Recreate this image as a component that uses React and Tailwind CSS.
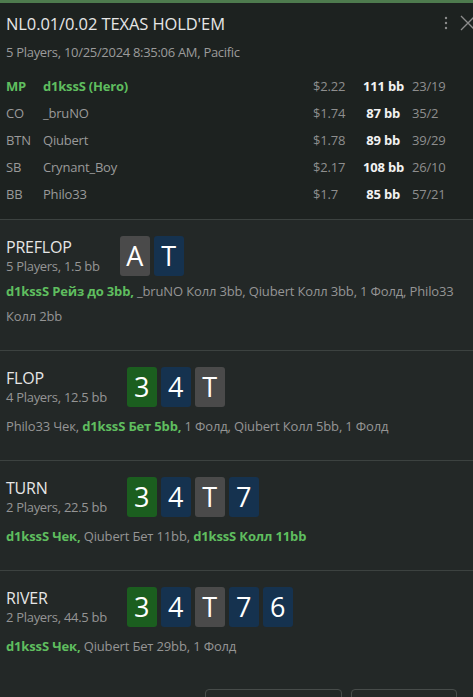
import React from 'react';

const players = [
  { pos: 'MP', name: 'd1kssS (Hero)', stack: '$2.22', bb: '111 bb', stats: '23/19', hero: true },
  { pos: 'CO', name: '_bruNO', stack: '$1.74', bb: '87 bb', stats: '35/2' },
  { pos: 'BTN', name: 'Qiubert', stack: '$1.78', bb: '89 bb', stats: '39/29' },
  { pos: 'SB', name: 'Crynant_Boy', stack: '$2.17', bb: '108 bb', stats: '26/10' },
  { pos: 'BB', name: 'Philo33', stack: '$1.7', bb: '85 bb', stats: '57/21' },
];

const cardColors = {
  g: 'bg-[#1b5e1f]',
  b: 'bg-[#15324f]',
  n: 'bg-[#4a4a4a]',
};

const streets = [
  {
    title: 'PREFLOP',
    sub: '5 Players, 1.5 bb',
    cards: [['A', 'n'], ['T', 'b']],
    actions: [
      ['d1kssS Рейз до 3bb,', true],
      [' _bruNO Колл 3bb, Qiubert Колл 3bb, 1 Фолд, Philo33 Колл 2bb', false],
    ],
    gap: 'mt-[3px]',
  },
  {
    title: 'FLOP',
    sub: '4 Players, 12.5 bb',
    cards: [['3', 'g'], ['4', 'b'], ['T', 'n']],
    actions: [
      ['Philo33 Чек, ', false],
      ['d1kssS Бет 5bb,', true],
      [' 1 Фолд, Qiubert Колл 5bb, 1 Фолд', false],
    ],
    gap: 'mt-[7px]',
  },
  {
    title: 'TURN',
    sub: '2 Players, 22.5 bb',
    cards: [['3', 'g'], ['4', 'b'], ['T', 'n'], ['7', 'b']],
    actions: [
      ['d1kssS Чек,', true],
      [' Qiubert Бет 11bb, ', false],
      ['d1kssS Колл 11bb', true],
    ],
    gap: 'mt-[7px]',
  },
  {
    title: 'RIVER',
    sub: '2 Players, 44.5 bb',
    cards: [['3', 'g'], ['4', 'b'], ['T', 'n'], ['7', 'b'], ['6', 'b']],
    actions: [
      ['d1kssS Чек,', true],
      [' Qiubert Бет 29bb, 1 Фолд', false],
    ],
    gap: 'mt-[7px]',
  },
];

const Card = ({ rank, color }) => (
  <div className={`w-[30px] h-[40px] rounded-[3px] flex items-center justify-center text-[27px] text-white ${cardColors[color]}`}>
    {rank}
  </div>
);

export default function App() {
  return (
    <div className="w-[473px] h-[697px] overflow-hidden bg-[#232827] text-[13px]" style={{ fontFamily: '"Open Sans", "Noto Sans", sans-serif' }}>
      <div className="h-[3px] bg-[#4e7b4e]" />

      {/* header */}
      <div className="bg-[#1d2220] border-b border-[#3c4240] pb-[11px]">
        <div className="flex items-start pl-[6px] pt-[9px]">
          <div className="flex-1">
            <div className="text-[16.5px] leading-[24px] text-[#e6e6e6] tracking-[-0.1px]">NL0.01/0.02 TEXAS HOLD'EM</div>
            <div className="text-[13px] leading-[18px] mt-[7px] text-[#9b9b9b] tracking-[-0.3px]">5 Players, 10/25/2024 8:35:06 AM, Pacific</div>
          </div>
          <div className="flex items-start gap-[12px] pt-[3px] -mr-[3px]">
            <svg width="4" height="14" viewBox="0 0 4 14" className="mt-[1px]">
              <circle cx="2" cy="2" r="1.2" fill="#8c8c8c" />
              <circle cx="2" cy="7" r="1.2" fill="#8c8c8c" />
              <circle cx="2" cy="12" r="1.2" fill="#8c8c8c" />
            </svg>
            <svg width="16" height="16" viewBox="0 0 16 16">
              <path d="M1 1 L15 15 M15 1 L1 15" stroke="#8c8c8c" strokeWidth="1.3" />
            </svg>
          </div>
        </div>

        <div className="mt-[12px]">
          {players.map((p) => (
            <div key={p.pos} className="flex items-center h-[27px] pl-[6px] tracking-[-0.2px]">
              <div className={`w-[37px] ${p.hero ? 'text-[#5fbe5f] font-bold' : 'text-[#9a9a9a]'}`}>{p.pos}</div>
              <div className={`flex-1 ${p.hero ? 'text-[#5fbe5f] font-bold' : 'text-[#9a9a9a]'}`}>{p.name}</div>
              <div className="w-[50px] text-[#8e8e8e]">{p.stack}</div>
              <div className="w-[37px] text-right font-bold text-[#f2f2f2] whitespace-nowrap">{p.bb}</div>
              <div className="w-[73px] pl-[12px] text-[#8e8e8e]">{p.stats}</div>
            </div>
          ))}
        </div>
      </div>

      {/* streets */}
      {streets.map((s, idx) => (
        <div
          key={s.title}
          className={`${idx < streets.length - 1 ? 'border-b border-[#3c4240]' : ''} pl-[6px] pr-[10px] pt-[16px] pb-[21px]`}
        >
          <div className="flex items-center">
            <div className="mr-[20px]">
              <div className="text-[16px] leading-[20px] text-[#e6e6e6] tracking-[-0.2px]">{s.title}</div>
              <div className="text-[13px] leading-[18px] text-[#959595] tracking-[-0.3px]">{s.sub}</div>
            </div>
            <div className="flex gap-[4px]">
              {s.cards.map(([r, c], i) => (
                <Card key={i} rank={r} color={c} />
              ))}
            </div>
          </div>
          <p className={`${s.gap} leading-[25px] text-[#959595] tracking-[-0.15px]`}>
            {s.actions.map(([t, hero], i) => (
              <span key={i} className={hero ? 'text-[#5fbe5f] font-bold' : ''}>{t}</span>
            ))}
          </p>
        </div>
      ))}

      <div className="flex justify-end gap-[9px] pr-[16px] pt-[9px]">
        <div className="w-[137px] h-[30px] rounded-[4px] border border-[#474c4a]" />
        <div className="w-[106px] h-[30px] rounded-[4px] border border-[#474c4a]" />
      </div>
    </div>
  );
}
